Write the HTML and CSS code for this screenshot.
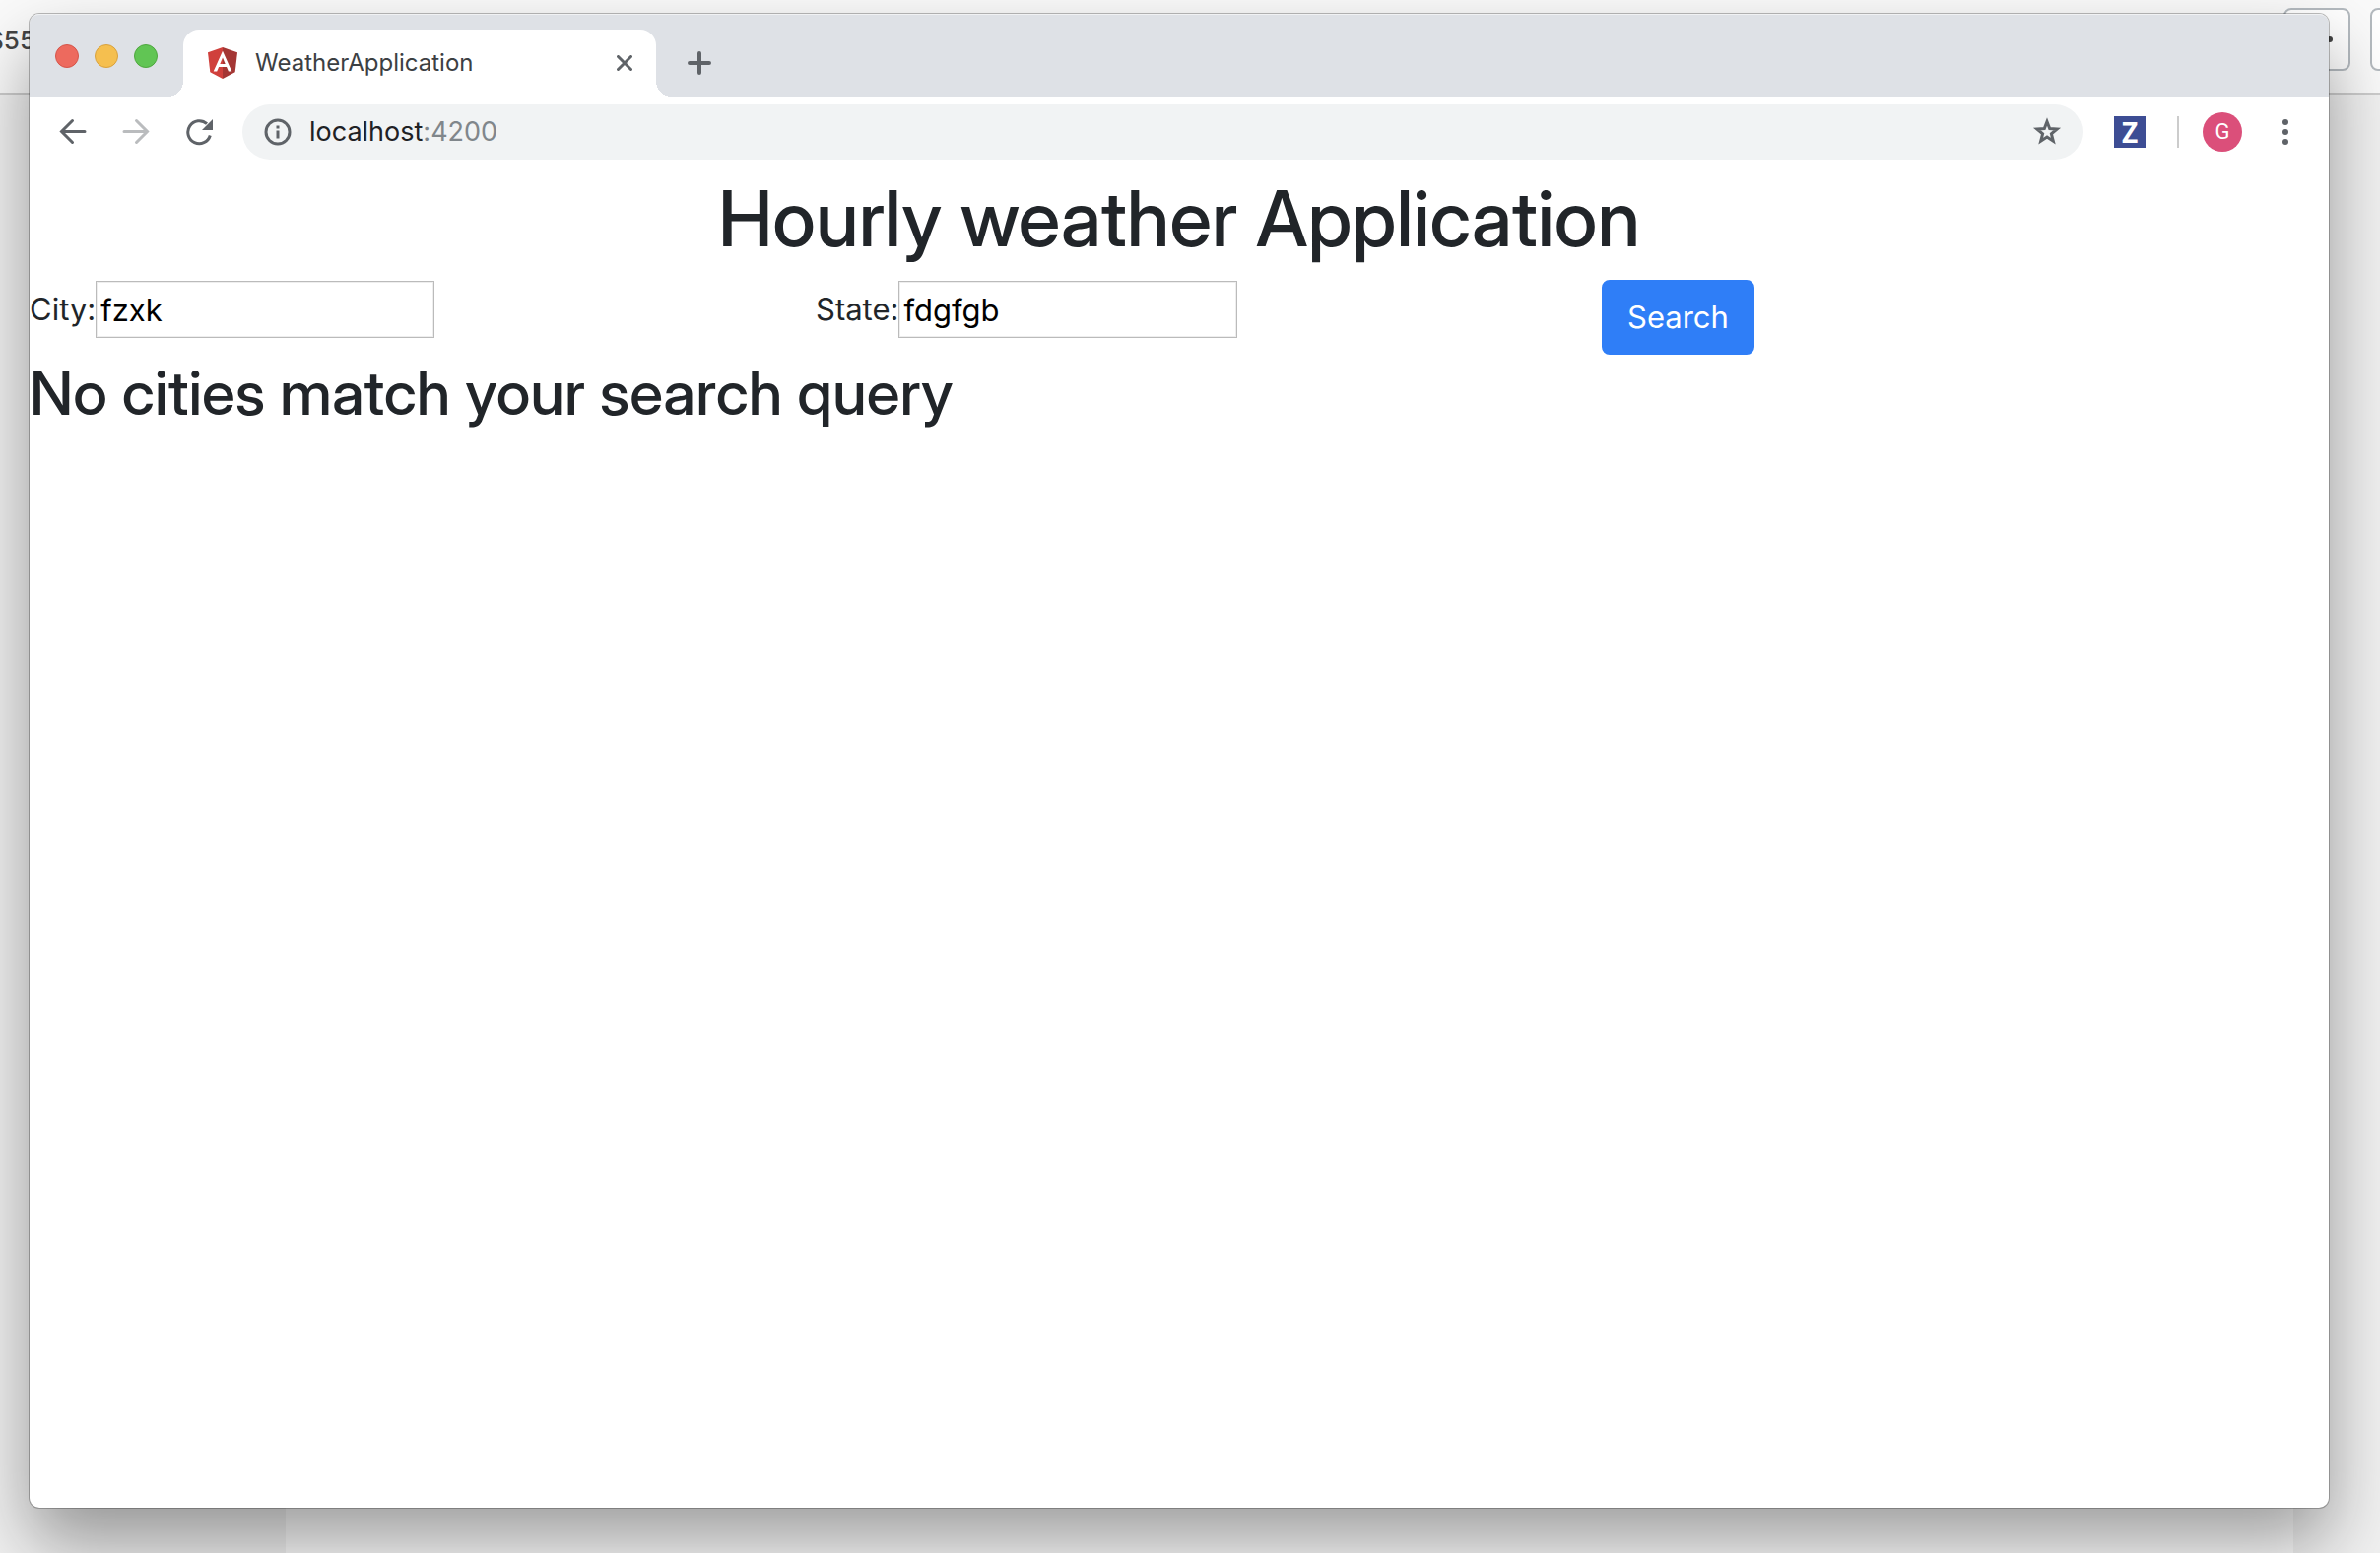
FILE: index.html
```html
<!DOCTYPE html>
<html lang="en">
<head>
<meta charset="utf-8">
<title>WeatherApplication</title>
<link rel="stylesheet" href="styles.css">
</head>
<body>
<div class="desktop">
  <div class="behind">
    <div class="behind-bar">
      <span class="behind-text">S55</span>
      <button class="behind-button" type="button" aria-label="More"><svg width="64" height="60" viewBox="0 0 64 60"><circle cx="45" cy="30" r="3" fill="#444"/></svg></button>
      <button class="behind-button cut" type="button" aria-label="Next"></button>
    </div>
    <div class="behind-body"><div class="behind-main"></div></div>
  </div>

  <div class="window">
    <header class="tabstrip">
      <div class="lights">
        <button class="light red" type="button" aria-label="Close window"></button>
        <button class="light yellow" type="button" aria-label="Minimize window"></button>
        <button class="light green" type="button" aria-label="Zoom window"></button>
      </div>
      <div class="tab">
        <svg class="favicon" width="30" height="32" viewBox="0 0 30 32"><path fill="#d0403c" d="M15 0 0 5.300 2.300 25.200 15 32z"/><path fill="#a43634" d="M15 0 30 5.300 27.700 25.200 15 32z"/><path fill="#fff" d="M15 3.800 5.700 24.600h3.500l1.900-4.700h7.900l1.900 4.700h3.400zM15 10.500l2.700 6.500h-5.400z"/></svg>
        <span class="tab-title">WeatherApplication</span>
        <button class="icon-button" type="button" aria-label="Close tab"><svg width="16" height="16" viewBox="0 0 16 16"><path d="M1.500 1.500l13 13M14.500 1.500l-13 13" stroke="#5f6368" stroke-width="3" stroke-linecap="round"/></svg></button>
      </div>
      <button class="icon-button new-tab" type="button" aria-label="New tab"><svg width="24" height="24" viewBox="0 0 24 24"><path d="M12 2v20M2 12h20" stroke="#5f6368" stroke-width="4" stroke-linecap="round"/></svg></button>
    </header>

    <nav class="toolbar">
      <div class="nav-buttons">
        <button class="icon-button" type="button" aria-label="Back"><svg width="28" height="28" viewBox="0 0 28 28" fill="none" stroke="#5f6368" stroke-width="3" stroke-linecap="round"><path d="M26 13.500H3M13.500 2.500l-11 11 11 11"/></svg></button>
        <button class="icon-button" type="button" aria-label="Forward"><svg width="28" height="28" viewBox="0 0 28 28" fill="none" stroke="#babcbe" stroke-width="3" stroke-linecap="round"><path d="M2 13.500h23M14.500 2.500l11 11-11 11"/></svg></button>
        <button class="icon-button" type="button" aria-label="Reload"><svg width="28" height="28" viewBox="0 0 28 28"><path fill="none" stroke="#5f6368" stroke-width="3" d="M25.300 17.500A11.500 11.500 0 1 1 22 5.700"/><path fill="#5f6368" d="M28 1v11H17z"/></svg></button>
      </div>
      <div class="omnibox">
        <svg width="28" height="28" viewBox="0 0 28 28"><circle cx="14" cy="14" r="12" fill="none" stroke="#5f6368" stroke-width="3"/><path d="M12.500 12.500h3v8h-3zM12.500 7.500h3v3h-3z" fill="#5f6368"/></svg>
        <span class="url">localhost<span class="port">:4200</span></span>
        <button class="icon-button" type="button" aria-label="Bookmark"><svg width="30" height="30" viewBox="0 0 30 30"><path fill="none" stroke="#5f6368" stroke-width="3" d="M15 4.500l2.700 7 7.500.5-5.800 4.800 1.900 7.400L15 20.100l-6.300 4.100 1.900-7.400L4.800 12l7.500-.500z"/></svg></button>
      </div>
      <div class="extensions">
        <button class="extension" type="button" aria-label="Z extension">Z</button>
        <span class="divider"></span>
        <button class="avatar" type="button">G</button>
        <button class="icon-button" type="button" aria-label="Menu"><svg width="8" height="28" viewBox="0 0 8 28" fill="#5f6368"><circle cx="4" cy="4" r="3"/><circle cx="4" cy="14" r="3"/><circle cx="4" cy="24" r="3"/></svg></button>
      </div>
    </nav>

    <main class="page">
      <h1>Hourly weather Application</h1>
      <form class="search-row">
        <div class="field"><label for="city">City:</label><input id="city" type="text" value="fzxk"></div>
        <div class="field"><label for="state">State:</label><input id="state" type="text" value="fdgfgb"></div>
        <div><button class="search" type="button">Search</button></div>
      </form>
      <h2>No cities match your search query</h2>
    </main>
  </div>
</div>
</body>
</html>
```
FILE: styles.css
```css
* { box-sizing: border-box; }
body {
  margin: 0;
  font-family: Inter, "Liberation Sans", sans-serif;
  color: #212529;
}
button {
  margin: 0;
  padding: 0;
  border: 0;
  background: none;
  font-family: inherit;
}
svg { display: block; flex: none; }

.desktop {
  position: relative;
  display: flex;
  min-height: 100vh;
  padding: 14px 52px 46px 30px;
  overflow: hidden;
}

/* Window lying behind the browser */
.behind {
  position: absolute;
  inset: 0;
  display: flex;
  flex-direction: column;
  background: #f1f1f1;
}
.behind-bar {
  display: flex;
  align-items: flex-start;
  height: 96px;
  padding-top: 8px;
  border-bottom: 2px solid #ccc;
  background: #fafafa;
  overflow: hidden;
}
.behind-text {
  display: flex;
  justify-content: flex-end;
  width: 36px;
  margin-right: auto;
  font-size: 26px;
  font-weight: 500;
  line-height: 66px;
  color: #444;
}
.behind-button {
  flex: none;
  width: 68px;
  height: 64px;
  margin-right: 20px;
  border: 2px solid #b4babf;
  border-radius: 8px;
  background: #fff;
}
.behind-button.cut { margin-right: -58px; }
.behind-body {
  display: flex;
  flex: 1;
  padding: 0 88px 0 290px;
}
.behind-main { flex: 1; background: #fcfcfc; }

/* Browser window */
.window {
  position: relative;
  display: flex;
  flex: 1;
  flex-direction: column;
  border-radius: 10px;
  background: #fff;
  box-shadow: 0 0 0 1px rgba(0, 0, 0, .26), 0 36px 72px rgba(0, 0, 0, .38);
}
.tabstrip {
  display: flex;
  align-items: flex-end;
  height: 84px;
  padding-left: 26px;
  border-radius: 10px 10px 0 0;
  background: #dee1e6;
  box-shadow: inset 0 2px 0 -1px #f1f2f4;
}
.lights {
  display: flex;
  gap: 16px;
  padding-bottom: 29px;
  margin-right: 26px;
}
.light {
  width: 24px;
  height: 24px;
  border: 1px solid;
  border-radius: 50%;
}
.red { background: #ed6a5e; border-color: #d5554a; }
.yellow { background: #f5bf4f; border-color: #d8a13e; }
.green { background: #61c554; border-color: #4fa73f; }

.tab {
  position: relative;
  display: flex;
  align-items: center;
  width: 480px;
  height: 68px;
  padding: 0 24px 0 25px;
  border-radius: 16px 16px 0 0;
  background: #fff;
}
.tab::before,
.tab::after {
  content: "";
  position: absolute;
  bottom: 0;
  width: 16px;
  height: 16px;
}
.tab::before {
  right: 100%;
  background: radial-gradient(circle at 0 0, transparent 16px, #fff 16px);
}
.tab::after {
  left: 100%;
  background: radial-gradient(circle at 100% 0, transparent 16px, #fff 16px);
}
.tab-title {
  flex: 1;
  margin-left: 18px;
  font-size: 24px;
  line-height: 32px;
  color: #3c4043;
}
.new-tab { margin: 0 0 22px 32px; }

.toolbar {
  display: flex;
  align-items: center;
  height: 74px;
  padding: 0 40px 2px 30px;
  border-bottom: 1px solid #b4b6b8;
}
.nav-buttons {
  display: flex;
  gap: 36px;
  margin-right: 30px;
}
.omnibox {
  display: flex;
  flex: 1;
  align-items: center;
  height: 56px;
  padding: 0 21px 0 22px;
  border-radius: 28px;
  background: #f1f3f4;
}
.url {
  flex: 1;
  margin-left: 18px;
  font-size: 27px;
  line-height: 36px;
  color: #202124;
}
.port { color: #80868b; }
.extensions {
  display: flex;
  align-items: center;
  margin-left: 32px;
}
.extension {
  width: 32px;
  height: 32px;
  background: #3d4d94;
  color: #fff;
  font-family: "Open Sans", sans-serif;
  font-size: 28px;
  font-weight: 700;
  line-height: 32px;
}
.divider {
  width: 2px;
  height: 32px;
  margin: 0 24px 0 32px;
  background: #ccc;
}
.avatar {
  width: 40px;
  height: 40px;
  margin-right: 40px;
  border-radius: 50%;
  background: #db4f7a;
  color: #fff;
  font-family: Roboto, sans-serif;
  font-size: 22px;
  line-height: 40px;
}

/* Weather page */
.page { flex: 1; font-size: 31px; line-height: 48px; }
h1, h2 { margin: 0; font-family: "Inter Display", Inter, sans-serif; font-weight: 500; }
h1 {
  padding-top: 2px;
  margin-bottom: 14px;
  font-size: 78px;
  line-height: 96px;
  text-align: center;
}
h2 { font-size: 62px; line-height: 77px; }
.search-row {
  display: grid;
  grid-template-columns: repeat(3, 1fr);
  column-gap: 60px;
}
.field { display: flex; align-items: center; height: 60px; }
.field input {
  width: 344px;
  height: 58px;
  padding: 2px 4px;
  border: 1px solid #bbb;
  background: #fff;
  box-shadow: inset 0 0 0 1px #eee;
  color: #000;
  font-family: inherit;
  font-size: 31px;
}
.search {
  height: 76px;
  padding: 0 24px;
  border: 2px solid #2f7ef7;
  border-radius: 8px;
  background: #2f7ef7;
  color: #fff;
  font-size: 31px;
  line-height: 48px;
}
```
